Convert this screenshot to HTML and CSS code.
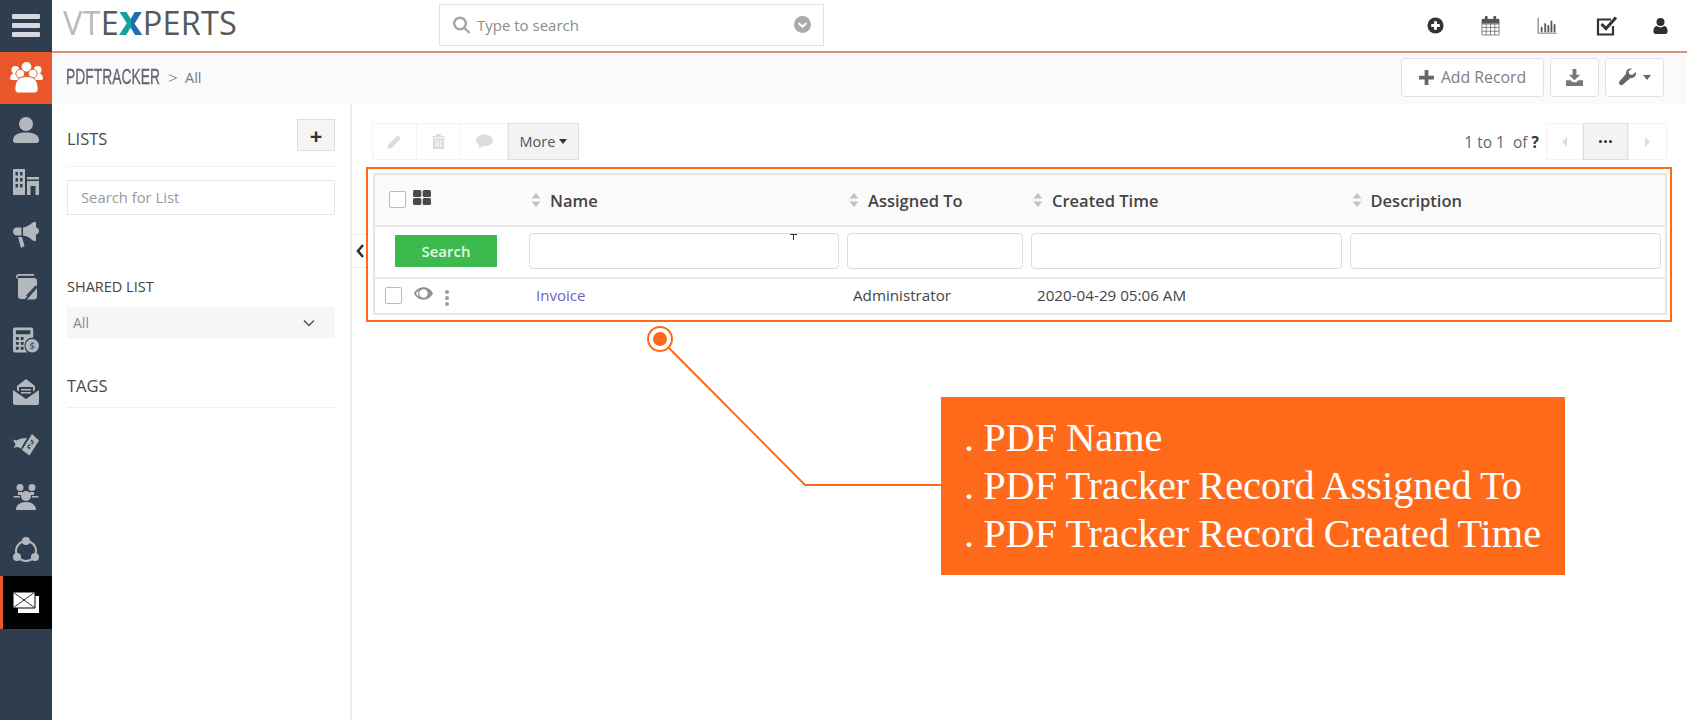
FILE: index.html
```html
<!DOCTYPE html>
<html lang="en">
<head>
<meta charset="utf-8">
<title>PDF Tracker</title>
<link rel="stylesheet" href="styles.css">
</head>
<body>
<nav class="rail">
  <div class="rail-item rail-menu">
    <svg class="ico-menu" viewBox="0 0 28 24"><rect y="0" width="28" height="5" rx="1"/><rect y="9" width="28" height="5" rx="1"/><rect y="18" width="28" height="5" rx="1"/></svg>
  </div>
  <div class="rail-item rail-active">
    <svg class="ico-rail ico-white" viewBox="0 0 34 32"><circle cx="5.5" cy="8" r="4"/><circle cx="28.500" cy="8" r="4"/><circle cx="17" cy="5" r="5"/><path d="M0 17c0-3.500 2-5.500 5-5.500h5v7H2c-1.200 0-2-.5-2-1.500zM34 17c0-3.500-2-5.500-5-5.500h-5v7h8c1.200 0 2-.5 2-1.500z"/><circle cx="10.500" cy="12" r="4.500" class="head-cut"/><circle cx="23.500" cy="12" r="4.500" class="head-cut"/><path class="head-cut" d="M5 28c0-9 4-13 12-13s12 4 12 13c0 3-2 4-4 4H9c-2 0-4-1-4-4z"/></svg>
  </div>
  <div class="rail-item">
    <svg class="ico-rail" viewBox="0 0 26 26"><circle cx="13" cy="7" r="7"/><path d="M0 23.500C0 18 5 15.500 13 15.500S26 18 26 23.500c0 1.500-1 2.500-2.500 2.500h-21C1 26 0 25 0 23.500z"/></svg>
  </div>
  <div class="rail-item">
    <svg class="ico-rail" viewBox="0 0 26 26"><path fill-rule="evenodd" d="M0 0h12v26H0zM2.500 3v3.500h2.500V3zM7 3v3.500h2.500V3zM2.500 9v3.500h2.500V9zM7 9v3.500h2.500V9zM2.500 15v3.500h2.500V15zM7 15v3.500h2.500V15z"/><path fill-rule="evenodd" d="M14 8h12v2.500H14zM14 12h12v14h-3.500v-9h-5v9H14z"/></svg>
  </div>
  <div class="rail-item">
    <svg class="ico-rail" viewBox="0 0 26 26"><path d="M21 0h2v5.500c2 .5 3 1.500 3 3.500s-1 3-3 3.500V19h-2l-2-1c-3-3-6-4-9-4.500V5.500c3-.5 6-2 9-4.500z"/><path d="M8.500 5.500v8H4C1.500 13.500 0 11.500 0 9.500s1.500-4 4-4z"/><path d="M5 15h4l2.500 9-3.500 2z"/></svg>
  </div>
  <div class="rail-item">
    <svg class="ico-rail" viewBox="0 0 22 26"><path d="M4 0h15v1.800H4c-1 0-1.500.5-1.500 1.500v1H1V3c0-2 1-3 3-3z"/><path d="M3 4h16c2 0 3 1 3 2.500v5L10 25H6.500C4 25 3 24 3 22z"/><path d="M22 14v8c0 2.500-1 3.500-3.500 3.500H12z"/><path class="doc-slash" d="M11.500 22L21 12"/></svg>
  </div>
  <div class="rail-item">
    <svg class="ico-rail" viewBox="0 0 27 26"><path fill-rule="evenodd" d="M2 0h17c1 0 2 1 2 2v8.500c-5 0-9 3.500-9 8.500 0 2.500 1 5 3 7H2c-1 0-2-1-2-2V2C0 1 1 0 2 0zM3 3v4h15V3zM3 10v3h3v-3zM8 10v3h3v-3zM3 15v3h3v-3zM8 15v3h3v-3zM3 20v3h3v-3zM8 20v3h3v-3z"/><circle cx="20" cy="19" r="7"/><text class="dollar" x="20" y="22.500">$</text></svg>
  </div>
  <div class="rail-item">
    <svg class="ico-rail" viewBox="0 0 26 26"><path fill-rule="evenodd" d="M13 0l9 7v4l-2 1.500V8H6v4.500L4 11V7z"/><path d="M8 10h10v1.500H8zM8 13h10v1.500H8z"/><path d="M0 11l13 9 13-9v13c0 1-1 2-2 2H2c-1 0-2-1-2-2z"/></svg>
  </div>
  <div class="rail-item">
    <svg class="ico-rail" viewBox="0 0 26 22"><path fill-rule="evenodd" d="M19 0l7 6.500-9.500 15L9 16zM18.500 5.500L14 13l2.500 2.500L21 8z"/><path d="M0 5.500l3.500 1L8 4.500l6-.5-5.500 9.500L9 15l-3-1.500-3-.5-2.500 1.500 2-4z"/><text class="dollar dollar-tilt" x="17.500" y="14">$</text></svg>
  </div>
  <div class="rail-item">
    <svg class="ico-rail" viewBox="0 0 26 26"><circle cx="7" cy="3.500" r="3.500"/><circle cx="19" cy="3.500" r="3.500"/><circle cx="13" cy="12" r="5"/><path d="M1 12h6v1.500H0zM19 12h6l1 1.500h-7zM3 26c0-5 4-8 10-8s10 3 10 8z"/><path d="M5 8h4v3H5zM17 8h4v3h-4z"/></svg>
  </div>
  <div class="rail-item">
    <svg class="ico-rail ico-ring" viewBox="0 0 26 26"><circle class="ring" cx="13" cy="14" r="10"/><circle cx="13" cy="4" r="4"/><circle cx="4" cy="20" r="4"/><circle cx="22" cy="20" r="4"/></svg>
  </div>
  <div class="rail-item rail-mail">
    <svg class="ico-rail" viewBox="0 0 26 21"><path class="mail-back" d="M5 4h21v17H5z"/><path class="mail-front" d="M0 0h22v16H0z"/><path class="mail-line" d="M0 0l22 16M22 0L0 16"/></svg>
  </div>
</nav>

<div class="main">
  <header class="topbar">
    <div class="logo"><span class="logo-light">VT</span><span class="logo-dark">E</span><span class="logo-x">X</span><span class="logo-dark">PERTS</span></div>
    <div class="global-search">
      <svg class="ico-search" viewBox="0 0 18 18"><circle cx="7.500" cy="7.500" r="5.800"/><path d="M12 12l5 5"/></svg>
      <span class="global-search-text">Type to search</span>
      <svg class="ico-drop" viewBox="0 0 18 18"><circle cx="9" cy="9" r="9"/><path d="M4.800 7.500L9 11.500l4.200-4"/></svg>
    </div>
    <div class="top-icons">
      <svg class="top-plus" viewBox="0 0 18 18"><circle cx="9" cy="9" r="8.500"/><path class="white-stroke" d="M9 4.500v9M4.500 9h9"/></svg>
      <svg class="top-cal" viewBox="0 0 20 21"><path class="cal-frame" d="M1 4h18v16H1zM1 8.500h18M1 12h18M1 16h18M5.500 8.500V20M10 8.500V20M14.500 8.500V20"/><rect x="1" y="3" width="18" height="5"/><rect x="4" y="0" width="3" height="5" rx="1"/><rect x="13" y="0" width="3" height="5" rx="1"/></svg>
      <svg class="top-chart" viewBox="0 0 22 18"><path d="M.5 0v17.500H22v-1H1.500V0z"/><rect x="4" y="10" width="2" height="6"/><rect x="8" y="6" width="2" height="10"/><rect x="11.500" y="8" width="2" height="8"/><rect x="15" y="3" width="2" height="13"/><rect x="18.500" y="7" width="2" height="9"/></svg>
      <svg class="top-check" viewBox="0 0 22 22"><path class="check-box" d="M17 11v8.500H2v-15h13"/><path class="check-mark" d="M5.500 9l4.500 4.500L20 2.500"/></svg>
      <svg class="top-user" viewBox="0 0 16 18"><circle cx="8" cy="4.500" r="4.500"/><path d="M0 15c0-4 2-6 4-6 1 1 2.500 1.500 4 1.500S11 10 12 9c2 0 4 2 4 6 0 2-1 3-2.500 3h-11C1 18 0 17 0 15z"/></svg>
    </div>
  </header>

  <div class="subbar">
    <div class="crumb"><span class="crumb-module">PDFTRACKER</span><span class="crumb-sep">&gt;</span><span class="crumb-page">All</span></div>
    <div class="sub-actions">
      <button class="btn btn-add"><svg class="ico-plus" viewBox="0 0 16 16"><path d="M6 0h4v6h6v4h-6v6H6v-6H0V6h6z"/></svg>Add Record</button>
      <button class="btn btn-icon"><svg class="ico-down" viewBox="0 0 18 18"><path d="M7 0h4v6h4l-6 6-6-6h4z"/><path d="M0 12h5l2 2h4l2-2h5v6H0z"/></svg></button>
      <button class="btn btn-tool"><svg class="ico-wrench" viewBox="0 0 18 18"><path d="M12 0c-3 0-5 2.500-4.500 5.500L.7 13.500c-1 1-1 2.500 0 3.500s2.500 1 3.500 0l8-7c3 .5 5.800-1.500 5.800-5 0-.7-.1-1-.2-1.300L14 7l-3-1-1-3 3.700-2.800C13.300.1 12.700 0 12 0z"/></svg><span class="caret caret-tool"></span></button>
    </div>
  </div>

  <div class="content">
    <aside class="panel">
      <div class="panel-head">
        <span class="panel-title">LISTS</span>
        <button class="panel-add">+</button>
      </div>
      <div class="panel-search">Search for List</div>
      <div class="shared-label">SHARED LIST</div>
      <div class="shared-select"><span>All</span><svg class="ico-chev" viewBox="0 0 12 8"><path d="M1 1.500l5 5 5-5"/></svg></div>
      <div class="panel-title tags-title">TAGS</div>
    </aside>

    <section class="list">
      <button class="collapse-tab"><svg viewBox="0 0 10 16"><path d="M8 2L3 8l5 6"/></svg></button>
      <div class="toolbar">
        <div class="tool-group">
          <button class="tool tool-a"><svg class="ico-faint" viewBox="0 0 16 16"><path d="M11.500 1l3.500 3.500L5 15l-4.500 1 1-4.500z"/></svg></button>
          <button class="tool tool-b"><svg class="ico-faint" viewBox="0 0 14 16"><path fill-rule="evenodd" d="M5 0h4l1 2h4v1.500H0V2h4zM1 4.500h12V16H1zM4 6.500V14h1V6.500zM6.500 6.500V14h1V6.500zM9 6.500V14h1V6.500z"/></svg></button>
          <button class="tool tool-c"><svg class="ico-faint" viewBox="0 0 18 15"><path d="M9 0c5 0 9 2.800 9 6.300s-4 6.200-9 6.200c-1 0-1.500 0-2-.2C5.500 14 3.500 15 2 15c1-1 1.500-2 1.500-3.500C1.500 10.500 0 8.500 0 6.300 0 2.800 4 0 9 0z"/></svg></button>
          <button class="tool tool-more">More<span class="caret"></span></button>
        </div>
        <div class="pager">
          <span class="pager-text">1 to 1&nbsp; of <b>?</b></span>
          <div class="pager-btns">
            <button class="pg pg-side"><span class="arrow-left"></span></button>
            <button class="pg pg-mid"><span class="dots"></span></button>
            <button class="pg pg-side pg-next"><span class="arrow-right"></span></button>
          </div>
        </div>
      </div>

      <div class="table-wrap">
        <div class="table">
          <div class="row row-head">
            <div class="cell cell-tools">
              <span class="check"></span>
              <svg class="ico-grid" viewBox="0 0 18 15"><rect width="8.300" height="7" rx="1.500"/><rect x="9.700" width="8.300" height="7" rx="1.500"/><rect y="8" width="8.300" height="7" rx="1.500"/><rect x="9.700" y="8" width="8.300" height="7" rx="1.500"/></svg>
            </div>
            <div class="cell cell-head"><svg class="ico-sort" viewBox="0 0 10 14"><path d="M5 0l4.500 5.500h-9zM5 14L.5 8.500h9z"/></svg>Name</div>
            <div class="cell cell-head"><svg class="ico-sort" viewBox="0 0 10 14"><path d="M5 0l4.500 5.500h-9zM5 14L.5 8.500h9z"/></svg>Assigned To</div>
            <div class="cell cell-head"><svg class="ico-sort" viewBox="0 0 10 14"><path d="M5 0l4.500 5.500h-9zM5 14L.5 8.500h9z"/></svg>Created Time</div>
            <div class="cell cell-head"><svg class="ico-sort" viewBox="0 0 10 14"><path d="M5 0l4.500 5.500h-9zM5 14L.5 8.500h9z"/></svg>Description</div>
          </div>
          <div class="row row-filter">
            <div class="cell cell-search"><button class="btn-search">Search</button></div>
            <div class="cell cell-input"><div class="filter-input"><svg class="ico-cursor" viewBox="0 0 7 6"><path d="M0 .5h7M3.500 .5V6"/></svg></div></div>
            <div class="cell cell-input"><div class="filter-input"></div></div>
            <div class="cell cell-input"><div class="filter-input"></div></div>
            <div class="cell cell-input"><div class="filter-input"></div></div>
          </div>
          <div class="row row-data">
            <div class="cell cell-actions">
              <span class="check"></span>
              <svg class="ico-eye" viewBox="0 0 20 13"><path fill-rule="evenodd" d="M10 0c4.500 0 8 2.500 10 6.500C18 10.500 14.500 13 10 13S2 10.500 0 6.500C2 2.500 5.500 0 10 0zM10 2a4.500 4.500 0 100 9 4.500 4.500 0 000-9zM2 6.500c1 1.500 2.200 2.700 3.500 3.400C4.700 9 4.300 7.800 4.300 6.500s.4-2.500 1.200-3.400C4.200 3.800 3 5 2 6.500z"/></svg>
              <span class="kebab"><i></i><i></i><i></i></span>
            </div>
            <div class="cell cell-link">Invoice</div>
            <div class="cell cell-text">Administrator</div>
            <div class="cell cell-text">2020-04-29 05:06 AM</div>
            <div class="cell cell-text"></div>
          </div>
        </div>
        <div class="highlight"></div>
      </div>
    </section>
  </div>
</div>

<svg class="leader" viewBox="0 0 1687 720">
  <circle class="leader-ring" cx="660" cy="339" r="12"/>
  <circle class="leader-dot" cx="660" cy="339" r="7"/>
  <path class="leader-line" d="M669 348L805 485H941"/>
</svg>
<div class="callout">
  <div>. PDF Name</div>
  <div>. PDF Tracker Record Assigned To</div>
  <div>. PDF Tracker Record Created Time</div>
</div>
</body>
</html>
```

FILE: styles.css
```css
* { box-sizing: border-box; }
html, body { height: 100%; }
body {
  margin: 0;
  display: flex;
  height: 720px;
  overflow: hidden;
  background: #fff;
  color: #444;
  font-family: "Open Sans", "Liberation Sans", sans-serif;
  position: relative;
}
button { font-family: inherit; cursor: default; }
svg { display: block; flex: none; }

/* rail */
.rail {
  width: 52px;
  flex: none;
  background: #2f3e4e;
  display: flex;
  flex-direction: column;
}
.rail-item {
  height: 52.500px;
  display: flex;
  align-items: center;
  justify-content: center;
  flex: none;
}
.rail-menu { height: 51.500px; }
.ico-menu { width: 28px; height: 24px; fill: #d5d9dd; }
.rail-active { background: #e9572b; height: 52px; }
.ico-rail { width: 26px; height: 26px; fill: #b3b8be; }
.ico-white { width: 33px; height: 31px; fill: #fff; }
.head-cut { stroke: #e9572b; stroke-width: 1; }
.doc-slash { fill: none; stroke: #2f3e4e; stroke-width: 1.400; }
.dollar {
  fill: #2f3e4e;
  font-size: 10px;
  text-anchor: middle;
  font-family: "Open Sans", sans-serif;
}
.dollar-tilt { font-size: 9px; font-weight: 700; fill: #b3b8be; }
.ring { fill: none; stroke: #b3b8be; stroke-width: 2; }
.rail-mail { background: #000; border-left: 3px solid #e9572b; padding-right: 3px; }
.rail-mail svg { height: 21px; }
.mail-back { fill: #fff; }
.mail-front { fill: #fff; stroke: #000; stroke-width: 1; }
.mail-line { fill: none; stroke: #333; stroke-width: 1; }

.main { flex: 1; min-width: 0; display: flex; flex-direction: column; }

/* top bar */
.topbar {
  height: 53px;
  flex: none;
  border-bottom: 2px solid #d9957a;
  display: flex;
  align-items: center;
  padding-left: 11px;
}
.logo {
  width: 376px;
  flex: none;
  font-size: 32.500px;
  line-height: 1;
  letter-spacing: .2px;
  margin-bottom: 4px;
  font-family: "Open Sans", sans-serif;
  white-space: nowrap;
}
.logo-light { color: #b9bcbe; }
.logo-dark { color: #56595c; }
.logo-x {
  font-weight: 800;
  background: linear-gradient(90deg, #14a2a0 0%, #14a2a0 50%, #1f6fb0 50%, #1f6fb0 100%);
  -webkit-background-clip: text;
  background-clip: text;
  color: transparent;
}
.global-search {
  width: 385px;
  height: 42px;
  flex: none;
  border: 1px solid #dfe1e3;
  display: flex;
  align-items: center;
  padding: 0 12px 0 12px;
  margin-bottom: 2px;
}
.ico-search { width: 19px; height: 18px; fill: none; stroke: #a4a4a4; stroke-width: 2.400; }
.global-search-text { flex: 1; padding-left: 6px; font-size: 15px; color: #8b8b8b; }
.ico-drop { width: 17px; height: 17px; fill: #aaa; }
.ico-drop path { fill: none; stroke: #fff; stroke-width: 2.200; }
.top-icons {
  margin-left: auto;
  display: flex;
  align-items: center;
  padding-right: 19px;
}
.top-plus { width: 17px; height: 17px; fill: #333; margin-right: 37px; }
.white-stroke { stroke: #fff; stroke-width: 3; fill: none; }
.top-cal { width: 19px; height: 20px; fill: #555; margin-right: 36px; }
.cal-frame { fill: none; stroke: #666; stroke-width: .8; }
.top-chart { width: 22px; height: 16px; fill: #555; margin-right: 38px; }
.top-check { width: 22px; height: 22px; margin-right: 35px; fill: none; }
.check-box { stroke: #333; stroke-width: 2.200; }
.check-mark { stroke: #333; stroke-width: 3; }
.top-user { width: 15px; height: 16px; fill: #2f2f2f; }

/* sub bar */
.subbar {
  height: 51px;
  flex: none;
  background: #fafafa;
  display: flex;
  align-items: center;
  padding: 0 23px 3px 14px;
}
.crumb { display: flex; align-items: center; color: #666; }
.crumb-module {
  font-family: "Liberation Sans", sans-serif;
  font-size: 22px;
  color: #5f6670;
  -webkit-text-stroke: .3px #5f6670;
  display: inline-block;
  width: 96px;
  white-space: nowrap;
  transform: scaleX(.63);
  transform-origin: 0 50%;
}
.crumb-sep { font-size: 17px; width: 23px; padding-left: 6px; color: #666; font-weight: 300; }
.crumb-page { font-size: 14.500px; color: #777; }
.sub-actions { margin-left: auto; display: flex; gap: 6px; }
.btn {
  height: 39px;
  background: #fff;
  border: 1px solid #e2e2e2;
  border-radius: 3px;
  display: flex;
  align-items: center;
  justify-content: center;
  padding: 0;
  color: #808080;
  font-size: 15.800px;
}
.btn-add { width: 143px; gap: 7px; }
.ico-plus { width: 15px; height: 15px; fill: #666; }
.btn-icon { width: 49px; }
.ico-down { width: 17px; height: 17px; fill: #777; }
.btn-tool { width: 59px; gap: 7px; }
.ico-wrench { width: 17px; height: 18px; fill: #666; }
.caret {
  display: inline-block;
  width: 0;
  height: 0;
  border-left: 4.500px solid transparent;
  border-right: 4.500px solid transparent;
  border-top: 5px solid #333;
  margin-left: 4px;
}
.caret-tool { border-top-color: #666; margin-left: 0; }

/* content */
.content { flex: 1; display: flex; min-height: 0; }
.panel {
  width: 300px;
  flex: none;
  padding: 15px 15px 0;
  border-right: 2px solid #ececec;
}
.panel-head {
  display: flex;
  justify-content: space-between;
  height: 48px;
  border-bottom: 1.500px solid #f0f0f0;
}
.panel-title { font-size: 16.500px; line-height: 40px; color: #4a4a4a; }
.panel-add {
  width: 38px;
  height: 32px;
  background: #f5f5f5;
  border: 1px solid #e0e0e0;
  padding: 0;
  font-size: 22px;
  font-weight: 700;
  line-height: 26px;
  color: #333;
}
.panel-search {
  margin-top: 13px;
  height: 35px;
  border: 1.500px solid #e6e6e6;
  padding-left: 13px;
  font-size: 14.800px;
  line-height: 32px;
  color: #999;
}
.shared-label { margin-top: 62px; font-size: 14.500px; line-height: 20px; color: #444; }
.shared-select {
  margin-top: 10px;
  height: 31px;
  background: #f6f6f6;
  padding: 0 20px 0 6px;
  display: flex;
  align-items: center;
  justify-content: space-between;
  font-size: 14px;
  color: #888;
}
.ico-chev { width: 12px; height: 8px; fill: none; stroke: #555; stroke-width: 1.500; }
.tags-title {
  margin-top: 26px;
  height: 44px;
  line-height: 44px;
  border-bottom: 1.500px solid #f0f0f0;
}

/* list */
.list { flex: 1; min-width: 0; padding: 19px 20px 0; position: relative; }
.collapse-tab {
  position: absolute;
  left: 0;
  top: 130px;
  width: 15px;
  height: 34px;
  background: #fff;
  border: 1px solid #eee;
  border-left: 0;
  padding: 0 0 0 3px;
}
.collapse-tab svg { width: 10px; height: 16px; fill: none; stroke: #333; stroke-width: 2.600; }
.toolbar { display: flex; justify-content: space-between; height: 37px; }
.tool-group { display: flex; }
.tool {
  height: 37px;
  background: #fff;
  border: 1px solid #f3f3f3;
  border-left: 0;
  display: flex;
  align-items: center;
  justify-content: center;
  padding: 0;
}
.tool-a { width: 45px; border-left: 1px solid #f3f3f3; }
.tool-b { width: 44px; }
.tool-c { width: 47px; }
.ico-faint { width: 15px; height: 15px; fill: #dcdcdc; }
.tool-c .ico-faint { width: 17px; }
.tool-more {
  width: 71px;
  background: #f3f3f3;
  border: 1px solid #dedede;
  font-size: 14.500px;
  color: #555;
}
.pager { display: flex; align-items: center; }
.pager-text { font-size: 15.500px; color: #666; margin-right: 7px; }
.pager-text b { color: #333; }
.pager-btns { display: flex; }
.pg {
  height: 37px;
  width: 37px;
  background: #fff;
  border: 1px solid #f3f3f3;
  padding: 0;
  display: flex;
  align-items: center;
  justify-content: center;
}
.pg-next { width: 39px; }
.pg-mid { width: 45px; background: #f3f3f3; border-color: #dedede; }
.arrow-left, .arrow-right { width: 0; height: 0; border-top: 5px solid transparent; border-bottom: 5px solid transparent; }
.arrow-left { border-right: 5px solid #ddd; }
.arrow-right { border-left: 5px solid #ddd; }
.dots {
  width: 3px;
  height: 3px;
  border-radius: 50%;
  background: #333;
  box-shadow: 5px 0 #333, -5px 0 #333;
}

.table-wrap { margin: 13px 0 0 1px; position: relative; }
.table { border: 2px solid #e6e6e6; }
.row {
  display: grid;
  grid-template-columns: 150px 318px 184px 318.500px 1fr;
}
.row-head { height: 52px; background: #fafafa; border-bottom: 2px solid #e8e8e8; }
.row-filter { height: 52px; border-bottom: 2px solid #e8e8e8; }
.row-data { height: 34px; }
.row-data .cell { padding-bottom: 2px; }
.cell { display: flex; align-items: center; min-width: 0; }
.cell-tools { padding-left: 14px; gap: 7px; padding-bottom: 2px; }
.check {
  width: 17px;
  height: 17px;
  background: #fff;
  border: 1.500px solid #bbb;
  border-radius: 2px;
  flex: none;
}
.ico-grid { width: 18px; height: 15px; fill: #4a4a4a; margin-top: -3px; }
.cell-head {
  padding-left: 6px;
  gap: 9px;
  font-size: 16.500px;
  font-weight: 600;
  color: #444;
}
.ico-sort { width: 10px; height: 14px; fill: #c2c2c2; }
.cell-search { padding: 0 0 2px 20px; }
.btn-search {
  width: 102px;
  height: 32px;
  background: #3cba4d;
  border: 0;
  padding: 0;
  color: #e8f8ea;
  font-size: 15px;
  font-weight: 600;
}
.cell-input { padding: 0 4px 2px; }
.filter-input {
  width: 100%;
  height: 36px;
  background: #fff;
  border: 1.500px solid #dcdcdc;
  border-radius: 4px;
  position: relative;
}
.ico-cursor {
  position: absolute;
  left: 260px;
  top: 0;
  width: 7px;
  height: 6px;
  fill: none;
  stroke: #333;
  stroke-width: 1;
}
.cell-actions { padding-left: 10px; position: relative; }
.ico-eye { width: 19px; height: 13px; fill: #8f8f8f; margin-left: 12px; margin-top: -4px; }
.kebab { display: flex; flex-direction: column; gap: 2px; margin-left: 12px; margin-top: 5px; }
.kebab i { width: 4px; height: 4px; border-radius: 50%; background: #9a9a9a; display: block; }
.cell-link { padding-left: 11px; font-size: 15px; color: #6a62c4; }
.cell-text { padding-left: 10px; font-size: 15.200px; color: #444; }
.highlight {
  position: absolute;
  inset: -6px -5px -7px -7px;
  border: 2px solid #ff6a1a;
  pointer-events: none;
}

/* callout */
.leader {
  position: absolute;
  left: 0;
  top: 0;
  width: 1687px;
  height: 720px;
  pointer-events: none;
}
.leader-ring { fill: #fff; stroke: #ff6a1a; stroke-width: 2; }
.leader-dot { fill: #ff6a1a; }
.leader-line { fill: none; stroke: #ff6a1a; stroke-width: 2; }
.callout {
  position: absolute;
  left: 941px;
  top: 397px;
  width: 624px;
  height: 178px;
  background: #ff6a1a;
  color: #fff;
  padding: 17px 0 0 23px;
  font-family: "Liberation Serif", serif;
  font-size: 40.300px;
  word-spacing: -1px;
  line-height: 48px;
  white-space: nowrap;
}
```
